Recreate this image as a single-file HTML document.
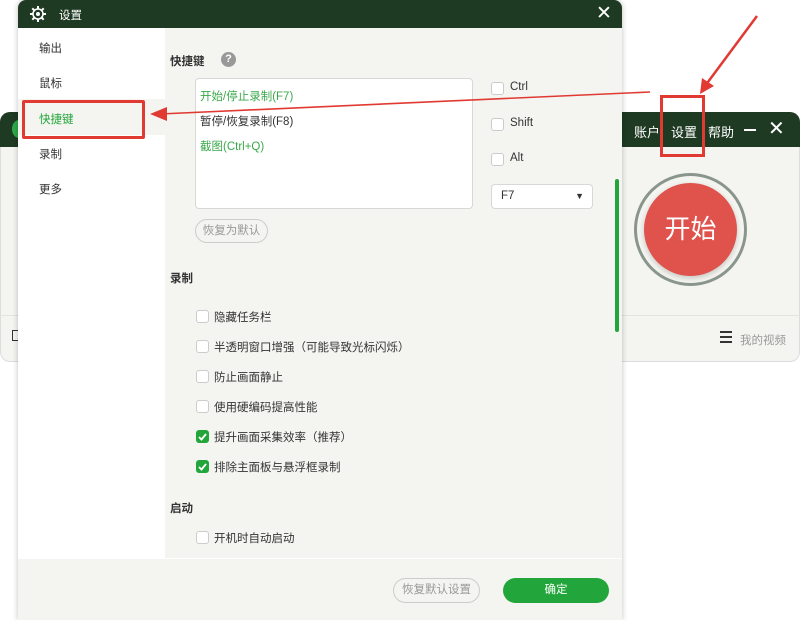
<!DOCTYPE html>
<html><head><meta charset="utf-8"><style>
*{margin:0;padding:0;box-sizing:border-box}
body{width:800px;height:620px;background:#fff;position:relative;overflow:hidden;font-family:"Liberation Sans","Noto Sans CJK SC",sans-serif;font-size:12px;color:#333}
.a{position:absolute}
.cb{position:absolute;width:13px;height:13px;border:1px solid #ccc;border-radius:3px;background:#fff}
.cb.on{background:#22a53a;border-color:#22a53a}
.lbl{position:absolute;font-size:11.5px;color:#333;white-space:nowrap}
</style></head><body>
<!-- main window behind -->
<div class="a" style="left:0;top:112px;width:800px;height:250px;background:#f4f5f1;border-radius:10px;border:1px solid #ddd"></div>
<div class="a" style="left:0;top:112px;width:800px;height:35px;background:#1e3a22;border-radius:10px 10px 0 0"></div>
<div class="a" style="left:12px;top:120px;width:14px;height:18px;background:#2ea84a;border-radius:50%"></div>
<div class="a" style="left:0;top:315px;width:800px;height:1px;background:#e2e4df"></div>
<div class="a" style="left:12px;top:330px;width:7px;height:11px;border:1.5px solid #333"></div>
<div class="a" style="left:634px;top:122px;color:#fff;font-size:13px">账户</div>
<div class="a" style="left:671px;top:122px;color:#fff;font-size:13px">设置</div>
<div class="a" style="left:708px;top:122px;color:#fff;font-size:13px">帮助</div>
<div class="a" style="left:744px;top:129px;width:12px;height:2px;background:#fff"></div>
<div class="a" style="left:768px;top:116px;color:#fff;font-size:20px">✕</div>
<div class="a" style="left:634px;top:173px;width:113px;height:113px;border:3px solid #8a968c;border-radius:50%"></div>
<div class="a" style="left:644px;top:183px;width:93px;height:93px;background:#e0524c;border-radius:50%;box-shadow:0 2px 6px rgba(0,0,0,.2);color:#fff;font-size:26px;text-align:center;line-height:93px">开始</div>
<div class="a" style="left:720px;top:331px;width:12px;height:12px;background:repeating-linear-gradient(#333 0 2px,transparent 2px 5px)"></div>
<div class="a" style="left:740px;top:332px;color:#999;font-size:11.5px">我的视频</div>
<!-- settings dialog -->
<div class="a" style="left:18px;top:0;width:604px;height:620px;background:#f4f5f1;border-radius:8px 8px 0 0;box-shadow:0 0 6px rgba(0,0,0,.25)"></div>
<div class="a" style="left:18px;top:0;width:604px;height:28px;background:#1f3a23;border-radius:8px 8px 0 0"></div>
<svg class="a" style="left:29px;top:5px" width="18" height="18" viewBox="0 0 18 18"><circle cx="9" cy="9" r="5" fill="none" stroke="#fff" stroke-width="1.6"/><circle cx="9" cy="9" r="2" fill="#fff"/><g stroke="#fff" stroke-width="2"><path d="M9 1v3M9 14v3M1 9h3M14 9h3M3.3 3.3l2 2M12.7 12.7l2 2M3.3 14.7l2-2M12.7 5.3l2-2"/></g></svg>
<div class="a" style="left:59px;top:7px;color:#fff;font-size:11.5px">设置</div>
<div class="a" style="left:596px;top:2px;color:#fff;font-size:19px">✕</div>
<div class="a" style="left:18px;top:28px;width:147px;height:530px;background:#fff"></div>
<div class="a" style="left:39px;top:40px;font-size:11.5px">输出</div>
<div class="a" style="left:39px;top:75px;font-size:11.5px">鼠标</div>
<div class="a" style="left:18px;top:99px;width:147px;height:36px;background:#f4f5f1"></div>
<div class="a" style="left:39px;top:111px;font-size:11.5px;color:#22a53a">快捷键</div>
<div class="a" style="left:39px;top:146px;font-size:11.5px">录制</div>
<div class="a" style="left:39px;top:181px;font-size:11.5px">更多</div>
<div class="a" style="left:170px;top:53px;font-weight:bold;font-size:11.5px">快捷键</div>
<div class="a" style="left:221px;top:52px;width:15px;height:15px;border-radius:50%;background:#999;color:#fff;font-size:11px;text-align:center;line-height:15px;font-weight:bold">?</div>
<div class="a" style="left:195px;top:78px;width:278px;height:131px;background:#fff;border:1px solid #d8d8d8;border-radius:4px"></div>
<div class="a" style="left:200px;top:88px;color:#3aa84a;font-size:11.5px">开始/停止录制(F7)</div>
<div class="a" style="left:200px;top:113px;font-size:11.5px">暂停/恢复录制(F8)</div>
<div class="a" style="left:200px;top:138px;color:#3aa84a;font-size:11.5px">截图(Ctrl+Q)</div>
<div class="a" style="left:195px;top:219px;width:73px;height:24px;border:1px solid #ccc;border-radius:12px;color:#999;font-size:11.5px;text-align:center;line-height:22px">恢复为默认</div>
<div class="cb" style="left:491px;top:82px"></div><div class="lbl" style="left:510px;top:81px">Ctrl</div>
<div class="cb" style="left:491px;top:118px"></div><div class="lbl" style="left:510px;top:117px">Shift</div>
<div class="cb" style="left:491px;top:153px"></div><div class="lbl" style="left:510px;top:152px">Alt</div>
<div class="a" style="left:491px;top:184px;width:102px;height:25px;background:#fff;border:1px solid #d8d8d8;border-radius:4px;padding-left:9px;line-height:23px;font-size:11.5px">F7<span style="position:absolute;right:8px;font-size:9px">▼</span></div>
<div class="a" style="left:615px;top:179px;width:4px;height:153px;background:#22a53a;border-radius:2px"></div>
<div class="a" style="left:170px;top:270px;font-weight:bold;font-size:11.5px">录制</div>
<div class="cb" style="left:196px;top:310px"></div><div class="lbl" style="left:214px;top:309px">隐藏任务栏</div>
<div class="cb" style="left:196px;top:340px"></div><div class="lbl" style="left:214px;top:339px">半透明窗口增强（可能导致光标闪烁）</div>
<div class="cb" style="left:196px;top:370px"></div><div class="lbl" style="left:214px;top:369px">防止画面静止</div>
<div class="cb" style="left:196px;top:400px"></div><div class="lbl" style="left:214px;top:399px">使用硬编码提高性能</div>
<div class="cb on" style="left:196px;top:430px"><svg width="11" height="11" style="position:absolute;left:0;top:0"><path d="M2 6l2.5 2.5L9 3" stroke="#fff" stroke-width="1.8" fill="none"/></svg></div><div class="lbl" style="left:214px;top:429px">提升画面采集效率（推荐）</div>
<div class="cb on" style="left:196px;top:460px"><svg width="11" height="11" style="position:absolute;left:0;top:0"><path d="M2 6l2.5 2.5L9 3" stroke="#fff" stroke-width="1.8" fill="none"/></svg></div><div class="lbl" style="left:214px;top:459px">排除主面板与悬浮框录制</div>
<div class="a" style="left:170px;top:500px;font-weight:bold;font-size:11.5px">启动</div>
<div class="cb" style="left:196px;top:531px"></div><div class="lbl" style="left:214px;top:530px">开机时自动启动</div>
<div class="a" style="left:18px;top:558px;width:604px;height:1px;background:#fff"></div>
<div class="a" style="left:393px;top:578px;width:87px;height:25px;border:1px solid #ccc;border-radius:13px;color:#999;font-size:11.5px;text-align:center;line-height:23px">恢复默认设置</div>
<div class="a" style="left:503px;top:578px;width:106px;height:25px;background:#22a53a;border-radius:13px;color:#fff;font-size:11.5px;text-align:center;line-height:25px">确定</div>
<!-- annotations -->
<div class="a" style="left:22px;top:100px;width:123px;height:39px;border:3px solid #e03a32;border-radius:2px"></div>
<div class="a" style="left:660px;top:95px;width:45px;height:62px;border:3px solid #e03a32"></div>
<svg class="a" style="left:0;top:0" width="800" height="620"><line x1="160" y1="114" x2="650" y2="92" stroke="#e03a32" stroke-width="1.6"/><polygon points="150,114 167,107 167,121" fill="#e03a32"/><line x1="757" y1="16" x2="705" y2="86" stroke="#e03a32" stroke-width="2.5"/><polygon points="700,94 702,78 714,86" fill="#e03a32"/></svg>
</body></html>
